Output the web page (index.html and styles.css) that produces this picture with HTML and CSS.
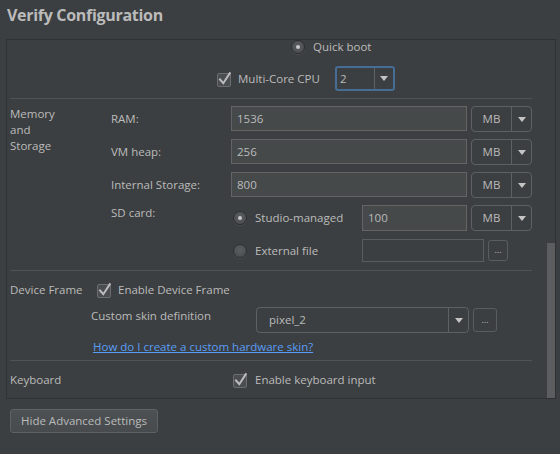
FILE: index.html
```html
<!DOCTYPE html>
<html>
<head>
<meta charset="utf-8">
<link rel="stylesheet" href="styles.css">
</head>
<body>
<h1 class="title">Verify Configuration</h1>
<div class="panel">
  <div class="content">
    <div class="row row-boot">
      <span class="radio on"></span><span class="opt">Quick boot</span>
    </div>
    <div class="row row-cpu">
      <svg class="check" width="15" height="16" viewBox="0 0 15 16"><rect x="0.5" y="2.5" width="13" height="13" rx="1.5" class="cb-box"/><path d="M3 8.5 L6.3 12.2 L12.8 2.2" class="cb-mark"/></svg>
      <span class="cpu-label">Multi-Core CPU</span>
      <div class="combo focus cpu"><span class="val">2</span><span class="drop"><span class="arrow"></span></span></div>
    </div>
    <hr class="sep">
    <div class="mem">
      <div class="sec-label">Memory<br>and<br>Storage</div>
      <div class="sub">RAM:</div><div class="field">1536</div><div class="combo unit"><span class="val">MB</span><span class="drop"><span class="arrow"></span></span></div>
      <div class="sub">VM heap:</div><div class="field">256</div><div class="combo unit"><span class="val">MB</span><span class="drop"><span class="arrow"></span></span></div>
      <div class="sub">Internal Storage:</div><div class="field">800</div><div class="combo unit"><span class="val">MB</span><span class="drop"><span class="arrow"></span></span></div>
      <div class="sub sub-top">SD card:</div>
      <div class="sd-row">
        <span class="radio on"></span><span class="opt sd-opt">Studio-managed</span>
        <div class="field sd-field">100</div>
      </div>
      <div class="combo unit"><span class="val">MB</span><span class="drop"><span class="arrow"></span></span></div>
      <div class="sd-ext">
        <span class="radio"></span><span class="opt sd-opt">External file</span>
        <div class="field ext-field"></div>
        <div class="dots">...</div>
      </div>
    </div>
    <hr class="sep sep-mem">
    <div class="row row-frame">
      <span class="frame-label">Device Frame</span>
      <svg class="check" width="15" height="16" viewBox="0 0 15 16"><rect x="0.5" y="2.5" width="13" height="13" rx="1.5" class="cb-box"/><path d="M3 8.5 L6.3 12.2 L12.8 2.2" class="cb-mark"/></svg>
      <span>Enable Device Frame</span>
    </div>
    <div class="row row-skin">
      <span class="skin-label">Custom skin definition</span>
      <div class="combo skin"><span class="val">pixel_2</span><span class="drop"><span class="arrow"></span></span></div>
      <div class="dots skin-dots">...</div>
    </div>
    <div class="row row-link">
      <a class="link" href="#">How do I create a custom hardware skin?</a>
    </div>
    <hr class="sep sep-link">
    <div class="row row-kb">
      <span class="kb-label">Keyboard</span>
      <svg class="check" width="15" height="16" viewBox="0 0 15 16"><rect x="0.5" y="2.5" width="13" height="13" rx="1.5" class="cb-box"/><path d="M3 8.5 L6.3 12.2 L12.8 2.2" class="cb-mark"/></svg>
      <span>Enable keyboard input</span>
    </div>
  </div>
  <div class="scrollbar"><div class="thumb"></div></div>
</div>
<button class="btn" type="button">Hide Advanced Settings</button>
</body>
</html>
```

FILE: styles.css
```css
html, body {
  margin: 0;
  padding: 0;
  background: #3c3f41;
  color: #bbbbbb;
  font-family: "Open Sans", "Noto Sans", sans-serif;
  font-size: 11.5px;
  line-height: 16px;
}

.title {
  margin: 0;
  height: 39px;
  box-sizing: border-box;
  padding: 3px 0 0 7px;
  font-size: 16px;
  line-height: 24px;
  font-weight: 700;
  color: #bbbbbb;
  letter-spacing: -0.3px;
}

.panel {
  margin: 0 4px 0 6px;
  height: 360px;
  box-sizing: border-box;
  border: 1px solid #2f3133;
  display: flex;
  overflow: hidden;
}

.content {
  flex: 1;
  padding: 0 15px 0 3px;
  min-width: 0;
}

.scrollbar {
  width: 8px;
  display: flex;
  flex-direction: column;
}

.thumb {
  margin-top: auto;
  height: 155px;
  background: #5b5d5f;
}

.row {
  display: flex;
  align-items: center;
}

.row-boot {
  height: 14px;
  padding-left: 281px;
}

.row-cpu {
  margin-top: 12px;
  height: 25px;
  padding-left: 207px;
}

.cpu-label {
  width: 97px;
}

.sep {
  margin: 7px 0 0 0;
  border: 0;
  height: 1px;
  background: #505355;
}

.sep-mem {
  margin-top: 8px;
}

.sep-link {
  margin-top: 5px;
}

/* radio */
.radio {
  width: 14px;
  height: 14px;
  border-radius: 50%;
  box-sizing: border-box;
  border: 1px solid #2d2f30;
  background: radial-gradient(circle at 50% 40%, #5a5e61 0%, #4e5254 60%, #45484a 100%);
  box-shadow: 0 1px 0 rgba(255,255,255,0.07);
  margin-right: 8px;
  flex: none;
  display: flex;
  align-items: center;
  justify-content: center;
}

.radio.on::after {
  content: "";
  width: 4px;
  height: 4px;
  border-radius: 50%;
  background: #c8c8c8;
}

/* checkbox */
.check {
  flex: none;
  margin-right: 6px;
  overflow: visible;
}

.cb-box {
  fill: #4a4e50;
  stroke: #6b6e70;
  stroke-width: 1;
}

.cb-mark {
  fill: none;
  stroke: #bcbcbc;
  stroke-width: 2;
  stroke-linecap: square;
  stroke-linejoin: miter;
}

/* combo */
.combo {
  display: flex;
  box-sizing: border-box;
  border: 1px solid #5e6163;
  border-radius: 4px;
  height: 25px;
  align-items: stretch;
}

.combo .val {
  flex: 1;
  display: flex;
  align-items: center;
  min-width: 0;
}

.combo .drop {
  width: 19px;
  border-left: 1px solid #5e6163;
  display: flex;
  align-items: center;
  justify-content: center;
}

.arrow {
  width: 0;
  height: 0;
  border-left: 4px solid transparent;
  border-right: 4px solid transparent;
  border-top: 5px solid #c4c4c4;
}

.combo.focus {
  border: 2px solid #466d94;
  border-radius: 3px;
}

.combo.focus .drop {
  width: 18px;
}

.cpu {
  width: 60px;
}

.cpu .val {
  padding-left: 3px;
}

.unit {
  margin-left: 4px;
  width: 61px;
  height: 26px;
}

.unit .val {
  justify-content: center;
}

/* memory grid */
.mem {
  margin-top: 7px;
  display: grid;
  grid-template-columns: 101px 120px 1fr 65px;
  grid-template-rows: 25px 25px 25px 26px 23px;
  row-gap: 8px;
}

.sec-label {
  grid-row: 1 / span 5;
  grid-column: 1;
}

.sub {
  grid-column: 2;
  align-self: center;
}

.sub-top {
  align-self: start;
}

.field {
  box-sizing: border-box;
  border: 1px solid #646464;
  background: #45494a;
  padding-left: 5px;
  display: flex;
  align-items: center;
  height: 25px;
}

.sd-row {
  grid-column: 3;
  display: flex;
  align-items: center;
  padding-left: 2px;
}

.sd-opt {
  width: 107px;
}

.sd-field {
  flex: 1;
  height: 26px;
}

.sd-ext {
  grid-column: 3 / span 2;
  display: flex;
  align-items: center;
  padding-left: 2px;
}

.ext-field {
  width: 122px;
  height: 23px;
  background: #3c3f41;
  border-color: #5a5d5f;
}

.dots {
  margin-left: 4px;
  width: 20px;
  height: 21px;
  box-sizing: border-box;
  border: 1px solid #5a5d5f;
  border-radius: 3px;
  display: flex;
  align-items: center;
  justify-content: center;
  font-size: 9px;
  line-height: 9px;
  padding-bottom: 2px;
}

/* device frame */
.row-frame {
  margin-top: 7px;
  height: 24px;
}

.frame-label {
  width: 87px;
}

.row-skin {
  margin-top: 5px;
  height: 26px;
  padding-left: 81px;
}

.skin-label {
  width: 165px;
  align-self: flex-start;
  padding-top: 1px;
}

.skin {
  width: 213px;
  height: 26px;
}

.skin .val {
  padding-left: 12px;
}

.skin-dots {
  width: 24px;
  height: 24px;
}

.row-link {
  margin-top: 6px;
  height: 16px;
  padding-left: 83px;
}

.link {
  color: #589df6;
  text-decoration: underline;
}

.row-kb {
  margin-top: 7px;
  height: 24px;
}

.kb-label {
  width: 223px;
}

.row-kb .check {
  margin-right: 7px;
}

/* button */
.btn {
  margin: 10px 0 0 10px;
  width: 148px;
  height: 24px;
  box-sizing: border-box;
  border: 1px solid #5e6163;
  border-radius: 3px;
  background: linear-gradient(#4d5153, #474b4d);
  color: #bbbbbb;
  font-family: "Open Sans", "Noto Sans", sans-serif;
  font-size: 11.5px;
  line-height: 16px;
  padding: 0;
  display: flex;
  align-items: center;
  justify-content: center;
}
```
